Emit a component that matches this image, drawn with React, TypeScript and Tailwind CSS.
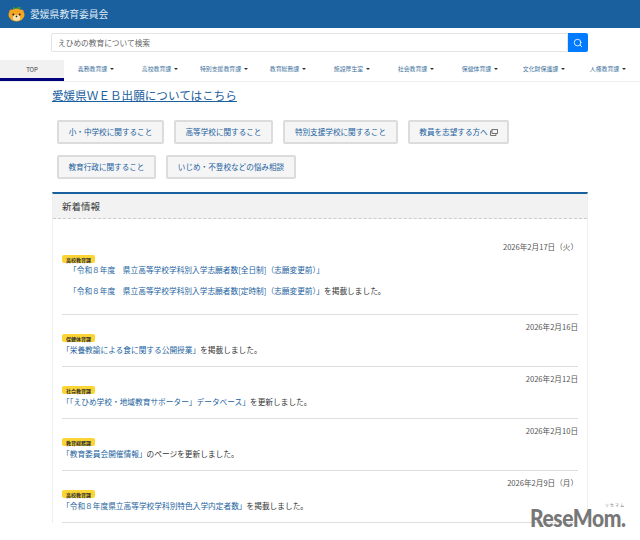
import { Search } from 'lucide-react';

const font = { fontFamily: '"Noto Sans CJK JP", "Liberation Sans", sans-serif' };

const navItems = ['義務教育課', '高校教育課', '特別支援教育課', '教育総務課', '施設厚生室', '社会教育課', '保健体育課', '文化財保護課', '人権教育課'];

const news = [
  { date: '2026年2月16日', badge: '保健体育課', link: '「栄養教諭による食に関する公開授業」', rest: 'を掲載しました。' },
  { date: '2026年2月12日', badge: '社会教育課', link: '「「えひめ学校・地域教育サポーター」データベース」', rest: 'を更新しました。' },
  { date: '2026年2月10日', badge: '教育総務課', link: '「教育委員会開催情報」', rest: 'のページを更新しました。' },
  { date: '2026年2月9日（月）', badge: '高校教育課', link: '「令和８年度県立高等学校学科別特色入学内定者数」', rest: 'を掲載しました。' },
];

function Badge({ label }: { label: string }) {
  return (
    <div className="flex h-2 w-[33px] items-center justify-center rounded-[2px] bg-[#fbd535] text-[5px] leading-none font-bold text-[#333]">
      {label}
    </div>
  );
}

function Btn({ label, width, external }: { label: string; width: string; external?: boolean }) {
  return (
    <a className={`flex h-6 items-center justify-center gap-[2px] rounded-[2px] border-2 border-[#dcdcdc] bg-[#f5f5f5] text-[7.6px] text-[#1a5f9e] ${width}`}>
      {label}
      {external && (
        <svg width="8" height="7" viewBox="0 0 8 7" fill="none" stroke="#555" strokeWidth="0.8">
          <rect x="2" y="0.5" width="5.5" height="4" />
          <path d="M2 2H0.5v4.5H6V4.5" />
        </svg>
      )}
    </a>
  );
}

export default function App() {
  return (
    <div className="relative h-[540px] w-[640px] overflow-hidden bg-white text-[#333]" style={font}>
      <header className="flex h-[28px] items-center bg-[#1a5f9e] pl-2">
        <svg width="17" height="16" viewBox="0 0 16 15">
          <path d="M5 3C4 1 5 .5 7.5 2 9 .5 11.5.5 12.5 1.5 11 3 9.500 3.500 8 3.500Z" fill="#3f9a35" />
          <circle cx="3" cy="5" r="1.700" fill="#f39a1e" />
          <circle cx="13" cy="5" r="1.700" fill="#f39a1e" />
          <ellipse cx="8" cy="8.500" rx="7.500" ry="6" fill="#f5a623" />
          <ellipse cx="8" cy="11" rx="3.500" ry="2.800" fill="#fde3b0" />
          <circle cx="5" cy="8" r="0.900" fill="#222" />
          <circle cx="11" cy="8" r="0.900" fill="#222" />
          <circle cx="8" cy="9.800" r="0.800" fill="#222" />
        </svg>
        <span className="ml-[5px] text-[9.8px] text-[#dfe9f3]">愛媛県教育委員会</span>
      </header>

      <div className="flex pt-[5px] pl-[51px]">
        <div className="flex h-[19px] w-[517px] items-center rounded-l-[2px] border border-[#e4e4e4] pl-[6px] text-[7.700px] text-[#666]">
          えひめの教育について検索
        </div>
        <button className="flex h-[19px] w-[20px] items-center justify-center rounded-r-[2px] bg-[#007bff]">
          <Search size={10} color="white" strokeWidth={2} />
        </button>
      </div>

      <nav className="mt-[8px] grid h-[22px] grid-cols-10 items-center border-b border-[#eee]">
        <div className="flex h-[21px] items-center justify-center border-b-[3px] border-[#00007f] bg-[#f1f1f1] pt-[1px] text-[6px] text-[#444]">
          TOP
        </div>
        {navItems.map(item => (
          <div key={item} className="flex items-center justify-center gap-[3px] pb-[2px] text-[5.900px] text-[#3d6f9c]">
            {item}
            <span className="h-0 w-0 border-x-[2px] border-t-[2px] border-x-transparent border-t-[#333]"></span>
          </div>
        ))}
      </nav>

      <div className="pl-[52px]">
        <a className="mt-[5px] block h-[16px] text-[11.600px] leading-[16px] text-[#1a5f9e] underline">愛媛県ＷＥＢ出願についてはこちら</a>
      </div>

      <div className="mt-[17px] flex flex-col gap-[11px] pl-[57px]">
        <div className="flex gap-[10px]">
          <Btn label="小・中学校に関すること" width="w-[107px]" />
          <Btn label="高等学校に関すること" width="w-[99px]" />
          <Btn label="特別支援学校に関すること" width="w-[115px]" />
          <Btn label="教員を志望する方へ" width="w-[101px]" external />
        </div>
        <div className="flex gap-[10px]">
          <Btn label="教育行政に関すること" width="w-[99px]" />
          <Btn label="いじめ・不登校などの悩み相談" width="w-[130px]" />
        </div>
      </div>

      <section className="mt-[13px] ml-[52px] w-[536px] border-x border-t-[2px] border-x-[#eee] border-t-[#1a5f9e]">
        <h2 className="flex h-[25px] items-center border-b border-dashed border-[#ccc] bg-[#f2f2f2] pl-[9px] text-[9.500px] text-[#333]">新着情報</h2>
        <div className="px-[9px] pt-[23px]">
          <div className="h-[73px] border-b border-[#ddd]">
            <p className="h-[10px] text-right text-[7.600px] leading-[10px] text-[#555]">2026年2月17日（火）</p>
            <div className="mt-[3px]"><Badge label="高校教育課" /></div>
            <p className="mt-[2px] pl-[7px] text-[7.700px] leading-[10px] text-[#1a5f9e]">「令和８年度　県立高等学校学科別入学志願者数[全日制]（志願変更前）」</p>
            <p className="mt-[11px] pl-[7px] text-[7.700px] leading-[10px]">
              <span className="text-[#1a5f9e]">「令和８年度　県立高等学校学科別入学志願者数[定時制]（志願変更前）」</span>を掲載しました。
            </p>
          </div>
          {news.map(n => (
            <div key={n.date} className="h-[52px] border-b border-[#ddd] pt-[7px]">
              <p className="h-[10px] text-right text-[7.600px] leading-[10px] text-[#555]">{n.date}</p>
              <div className="mt-[2px]"><Badge label={n.badge} /></div>
              <p className="mt-[3px] text-[7.700px] leading-[10px]">
                <span className="text-[#1a5f9e]">{n.link}</span>{n.rest}
              </p>
            </div>
          ))}
        </div>
      </section>

      <div className="absolute top-[503px] left-[530px] w-[100px]" style={{ fontFamily: 'Lato, sans-serif' }}>
        <div className="h-[5px] pr-[5px] text-right text-[4px] leading-[5px] tracking-[1px] text-[#777]" style={font}>リセマム</div>
        <div className="h-[19px] origin-top-left scale-x-[0.84] text-[25px] leading-[19px] font-black tracking-[-0.5px] text-[#777]">ReseMom.</div>
      </div>
    </div>
  );
}
